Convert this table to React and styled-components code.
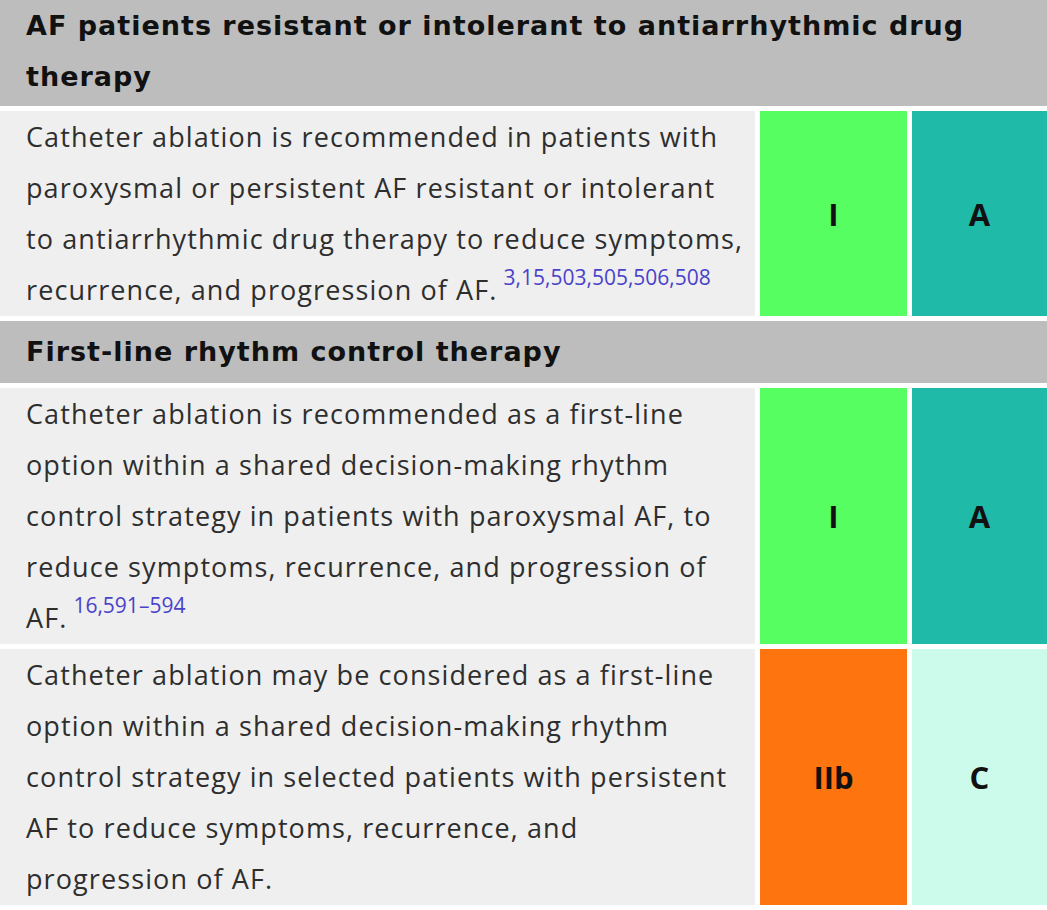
import React from "react"
import styled, { createGlobalStyle } from "styled-components"

const GlobalStyle = createGlobalStyle`
  html, body {
    margin: 0;
    padding: 0;
    background: #ffffff;
  }
  body {
    font-family: "Open Sans", Lato, sans-serif;
  }
`

const Table = styled.div`
  display: grid;
  grid-template-columns: 755px 147px 1fr;
  column-gap: 5px;
  row-gap: 5px;
  width: 1047px;
  background: #ffffff;
  padding-bottom: 5px;
`

const SectionHeader = styled.div`
  grid-column: 1 / -1;
  background: #bdbdbd;
  color: #111111;
  font-family: "DejaVu Sans", "Open Sans", sans-serif;
  font-weight: 700;
  font-size: 27px;
  letter-spacing: 1px;
  line-height: 51px;
  padding: 5px 26px 6px;
  white-space: nowrap;

  &:first-child {
    padding-top: 0;
    padding-bottom: 4px;
  }
`

const TextCell = styled.div`
  background: #efefef;
  color: #2e2e2e;
  font-size: 27px;
  letter-spacing: 1.1px;
  line-height: 51px;
  padding: 0 0 1px 26px;
  white-space: nowrap;
`

const Refs = styled.sup`
  color: #4a42c9;
  font-size: 21px;
  letter-spacing: 0;
  line-height: 0;
  vertical-align: 15px;
  margin-left: 6px;
`

const GradeCell = styled.div`
  display: flex;
  align-items: center;
  justify-content: center;
  background: ${(p) => p.$bg};
  color: #111111;
  font-family: "Open Sans", Lato, sans-serif;
  font-weight: 700;
  font-size: 31px;
`

const classColors = {
  I: "#56fe62",
  IIb: "#fe7510",
}

const levelColors = {
  A: "#20baa8",
  C: "#cdfbeb",
}

const sections = [
  {
    title: [
      "AF patients resistant or intolerant to antiarrhythmic drug",
      "therapy",
    ],
    recs: [
      {
        lines: [
          "Catheter ablation is recommended in patients with",
          "paroxysmal or persistent AF resistant or intolerant",
          "to antiarrhythmic drug therapy to reduce symptoms,",
          "recurrence, and progression of AF.",
        ],
        refs: "3,15,503,505,506,508",
        cls: "I",
        level: "A",
      },
    ],
  },
  {
    title: ["First-line rhythm control therapy"],
    recs: [
      {
        lines: [
          "Catheter ablation is recommended as a first-line",
          "option within a shared decision-making rhythm",
          "control strategy in patients with paroxysmal AF, to",
          "reduce symptoms, recurrence, and progression of",
          "AF.",
        ],
        refs: "16,591\u2013594",
        cls: "I",
        level: "A",
      },
      {
        lines: [
          "Catheter ablation may be considered as a first-line",
          "option within a shared decision-making rhythm",
          "control strategy in selected patients with persistent",
          "AF to reduce symptoms, recurrence, and",
          "progression of AF.",
        ],
        cls: "IIb",
        level: "C",
      },
    ],
  },
]

const Recommendation = ({ rec }) => (
  <>
    <TextCell>
      {rec.lines.map((line, i) => (
        <div key={i}>
          {line}
          {i === rec.lines.length - 1 && rec.refs && <Refs>{rec.refs}</Refs>}
        </div>
      ))}
    </TextCell>
    <GradeCell $bg={classColors[rec.cls]}>{rec.cls}</GradeCell>
    <GradeCell $bg={levelColors[rec.level]}>{rec.level}</GradeCell>
  </>
)

const App = () => (
  <>
    <GlobalStyle />
    <Table>
      {sections.map((section, s) => (
        <React.Fragment key={s}>
          <SectionHeader>
            {section.title.map((t, i) => (
              <div key={i}>{t}</div>
            ))}
          </SectionHeader>
          {section.recs.map((rec, r) => (
            <Recommendation key={r} rec={rec} />
          ))}
        </React.Fragment>
      ))}
    </Table>
  </>
)

export default App
